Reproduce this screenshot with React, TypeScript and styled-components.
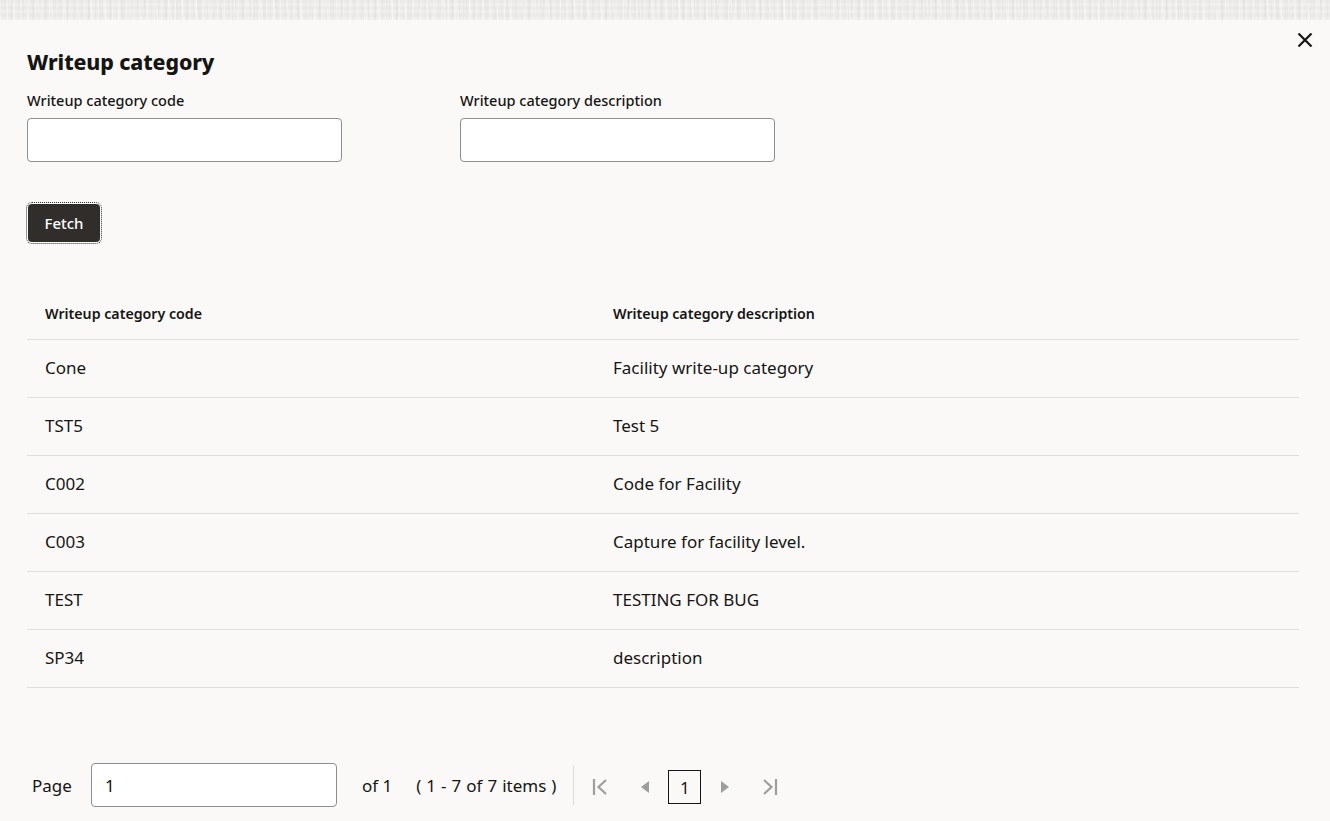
import React from 'react'
import styled, { createGlobalStyle } from 'styled-components'

const rows = [
  { code: 'Cone', description: 'Facility write-up category' },
  { code: 'TST5', description: 'Test 5' },
  { code: 'C002', description: 'Code for Facility' },
  { code: 'C003', description: 'Capture for facility level.' },
  { code: 'TEST', description: 'TESTING FOR BUG' },
  { code: 'SP34', description: 'description' }
]

export default function App() {
  return (
    <>
      <GlobalStyle />
      <Page>
        <TextureStrip />
        <Dialog>
          <CloseButton aria-label="Close">
            <svg width="16" height="16" viewBox="0 0 16 16">
              <path d="M1.5 1.5 14.5 14.5M14.5 1.5 1.5 14.5" stroke="#161513" strokeWidth="2.2" fill="none" />
            </svg>
          </CloseButton>
          <Title>Writeup category</Title>
          <FieldRow>
            <Field>
              <FieldLabel>Writeup category code</FieldLabel>
              <TextInput />
            </Field>
            <Field>
              <FieldLabel>Writeup category description</FieldLabel>
              <TextInput />
            </Field>
          </FieldRow>
          <FetchButton>Fetch</FetchButton>
          <Table>
            <thead>
              <tr>
                <HeadCell>Writeup category code</HeadCell>
                <HeadCell>Writeup category description</HeadCell>
              </tr>
            </thead>
            <tbody>
              {rows.map(row => (
                <tr key={row.code}>
                  <Cell>{row.code}</Cell>
                  <Cell>{row.description}</Cell>
                </tr>
              ))}
            </tbody>
          </Table>
          <Pager>
            <PagerText>Page</PagerText>
            <PageInput defaultValue="1" />
            <OfText>of 1</OfText>
            <ItemsText>( 1 - 7 of 7 items )</ItemsText>
            <PagerDivider />
            <PagerNav>
              <PagerIcon aria-label="First page">
                <svg width="16" height="16" viewBox="0 0 16 16">
                  <path d="M2 0v16" stroke="#9e9e9c" strokeWidth="2.2" fill="none" />
                  <path d="M14 1 6.500 8l7.500 7" stroke="#9e9e9c" strokeWidth="2.2" fill="none" />
                </svg>
              </PagerIcon>
              <PagerIcon aria-label="Previous page">
                <svg width="16" height="16" viewBox="0 0 16 16">
                  <path d="M13 2v12L5 8z" fill="#9e9e9c" />
                </svg>
              </PagerIcon>
              <CurrentPage>1</CurrentPage>
              <PagerIcon aria-label="Next page">
                <svg width="16" height="16" viewBox="0 0 16 16">
                  <path d="M4 2v12l8-6z" fill="#9e9e9c" />
                </svg>
              </PagerIcon>
              <PagerIcon aria-label="Last page">
                <svg width="16" height="16" viewBox="0 0 16 16">
                  <path d="M14 0v16" stroke="#9e9e9c" strokeWidth="2.2" fill="none" />
                  <path d="M2 1l7.500 7L2 15" stroke="#9e9e9c" strokeWidth="2.2" fill="none" />
                </svg>
              </PagerIcon>
            </PagerNav>
          </Pager>
        </Dialog>
      </Page>
    </>
  )
}

const GlobalStyle = createGlobalStyle`
  html, body {
    margin: 0;
    background: #fbf9f8;
    color: #161513;
    font-family: "Noto Sans", "Open Sans", sans-serif;
  }
`

const Page = styled.div`
  width: 1330px;
  height: 821px;
  overflow: hidden;
`

const TextureStrip = styled.div`
  height: 20px;
  background-color: #eceae8;
  background-image:
    repeating-linear-gradient(90deg, rgba(255, 255, 255, 0.35) 0 1px, transparent 1px 4px, rgba(0, 0, 0, 0.025) 4px 5px, transparent 5px 7px),
    repeating-linear-gradient(90deg, rgba(0, 0, 0, 0.02) 0 2px, transparent 2px 11px),
    repeating-linear-gradient(0deg, rgba(255, 255, 255, 0.25) 0 3px, transparent 3px 7px),
    repeating-linear-gradient(84deg, rgba(255, 255, 255, 0.25) 0 2px, transparent 2px 13px);
`

const Dialog = styled.div`
  position: relative;
  padding: 0 31px 0 27px;
`

const CloseButton = styled.button`
  position: absolute;
  top: 12px;
  right: 17px;
  width: 16px;
  height: 16px;
  padding: 0;
  border: 0;
  background: none;
  display: flex;
`

const Title = styled.h1`
  margin: 0;
  padding-top: 27px;
  font-size: 21.3px;
  line-height: 30px;
  font-weight: 800;
  letter-spacing: -0.1px;
`

const FieldRow = styled.div`
  display: flex;
  gap: 118px;
  margin-top: 13px;
`

const Field = styled.div`
  display: flex;
  flex-direction: column;
  width: 315px;
`

const FieldLabel = styled.label`
  font-size: 14.5px;
  line-height: 20px;
  font-weight: 500;
  margin-bottom: 8px;
`

const TextInput = styled.input`
  box-sizing: border-box;
  height: 44px;
  width: 100%;
  border: 1px solid #8f8e8c;
  border-radius: 4px;
  background: #fff;
`

const FetchButton = styled.button`
  display: block;
  width: 72px;
  height: 38px;
  margin: 42px 0 0 1px;
  padding: 0;
  border: 0;
  border-radius: 4px;
  background: #312d2a;
  color: #fff;
  font: 500 15px "Noto Sans", "Open Sans", sans-serif;
  outline: 1px dotted #312d2a;
  outline-offset: 1px;
`

const Table = styled.table`
  width: 1272px;
  margin-top: 47px;
  border-collapse: collapse;
  table-layout: fixed;
`

const HeadCell = styled.th`
  height: 48px;
  padding: 0 18px 2px;
  border-bottom: 1px solid #dedddb;
  font-size: 14.2px;
  font-weight: 600;
  text-align: left;
  &:first-child {
    width: 532px;
  }
`

const Cell = styled.td`
  height: 55px;
  padding: 0 18px 2px;
  border-bottom: 1px solid #dedddb;
  font-size: 17px;
`

const Pager = styled.div`
  display: flex;
  align-items: center;
  height: 44px;
  margin-top: 75px;
  font-size: 17px;
`

const PagerText = styled.span`
  margin-left: 5px;
  margin-right: 19px;
`

const PageInput = styled.input`
  box-sizing: border-box;
  width: 246px;
  height: 44px;
  padding: 0 13px;
  border: 1px solid #8f8e8c;
  border-radius: 4px;
  background: #fff;
  color: #161513;
  font: 400 17px "Noto Sans", "Open Sans", sans-serif;
`

const OfText = styled.span`
  margin-left: 25px;
`

const ItemsText = styled.span`
  margin-left: 24px;
  word-spacing: 0.6px;
`

const PagerDivider = styled.span`
  width: 1px;
  height: 40px;
  margin: 0 18px 0 17px;
  background: #dedddb;
`

const PagerNav = styled.div`
  display: flex;
  align-items: center;
  gap: 16px;
  margin-top: 4px;
`

const PagerIcon = styled.span`
  display: flex;
  width: 16px;
  height: 16px;
  &:first-child {
    margin-right: 12px;
  }
  &:last-child {
    margin-left: 13px;
  }
`

const CurrentPage = styled.span`
  box-sizing: border-box;
  display: flex;
  align-items: center;
  justify-content: center;
  width: 33px;
  height: 34px;
  border: 1px solid #161513;
`
